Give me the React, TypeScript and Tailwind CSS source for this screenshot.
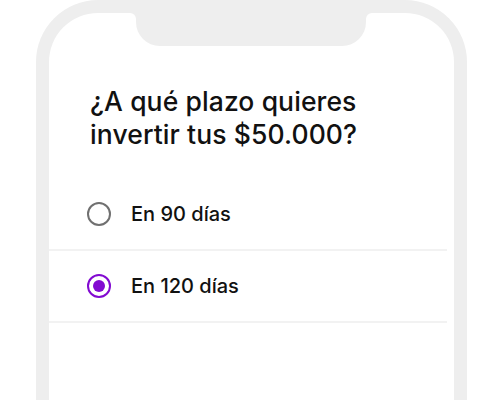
import { useState } from 'react';

const options = [
  { id: '90', label: 'En 90 días' },
  { id: '120', label: 'En 120 días' },
];

export default function App() {
  const [selected, setSelected] = useState('120');

  return (
    <div
      className="w-[504px] h-[400px] bg-white overflow-hidden"
      style={{ fontFamily: 'Inter, "Noto Sans", sans-serif' }}
    >
      {/* Phone frame */}
      <div className="relative ml-[36px] w-[431px] h-[460px] rounded-t-[62px] border-[13px] border-b-0 border-[#eeeeee] bg-white">
        {/* Notch */}
        <div className="absolute left-[87px] top-0 w-[230px] h-[33px] rounded-b-[24px] bg-[#eeeeee]" />
        <div className="absolute left-[81px] top-0 w-[6px] h-[6px] bg-[#eeeeee]">
          <div className="w-full h-full bg-white rounded-tr-[6px]" />
        </div>
        <div className="absolute left-[317px] top-0 w-[6px] h-[6px] bg-[#eeeeee]">
          <div className="w-full h-full bg-white rounded-tl-[6px]" />
        </div>

        <div className="pt-[72px]">
          <h1 className="pl-[41px] text-[26.5px] leading-[33px] font-medium tracking-[0.1px] text-[#111111]">
            ¿A qué plazo quieres
            <br />
            invertir tus $50.000?
          </h1>

          <ul className="mt-[28px] mr-[7px]">
            {options.map((opt) => {
              const active = selected === opt.id;
              return (
                <li
                  key={opt.id}
                  onClick={() => setSelected(opt.id)}
                  className="flex items-center h-[72px] pl-[38px] border-b-2 border-[#f2f2f2] cursor-pointer"
                >
                  <span
                    className={
                      active
                        ? 'flex items-center justify-center w-6 h-6 rounded-full border-2 border-[#820ad1]'
                        : 'flex items-center justify-center w-6 h-6 rounded-full border-2 border-[#707070]'
                    }
                  >
                    {active && <span className="w-3 h-3 rounded-full bg-[#820ad1]" />}
                  </span>
                  <span className="ml-[20px] text-[20px] font-medium text-[#111111]">
                    {opt.label}
                  </span>
                </li>
              );
            })}
          </ul>
        </div>
      </div>
    </div>
  );
}
